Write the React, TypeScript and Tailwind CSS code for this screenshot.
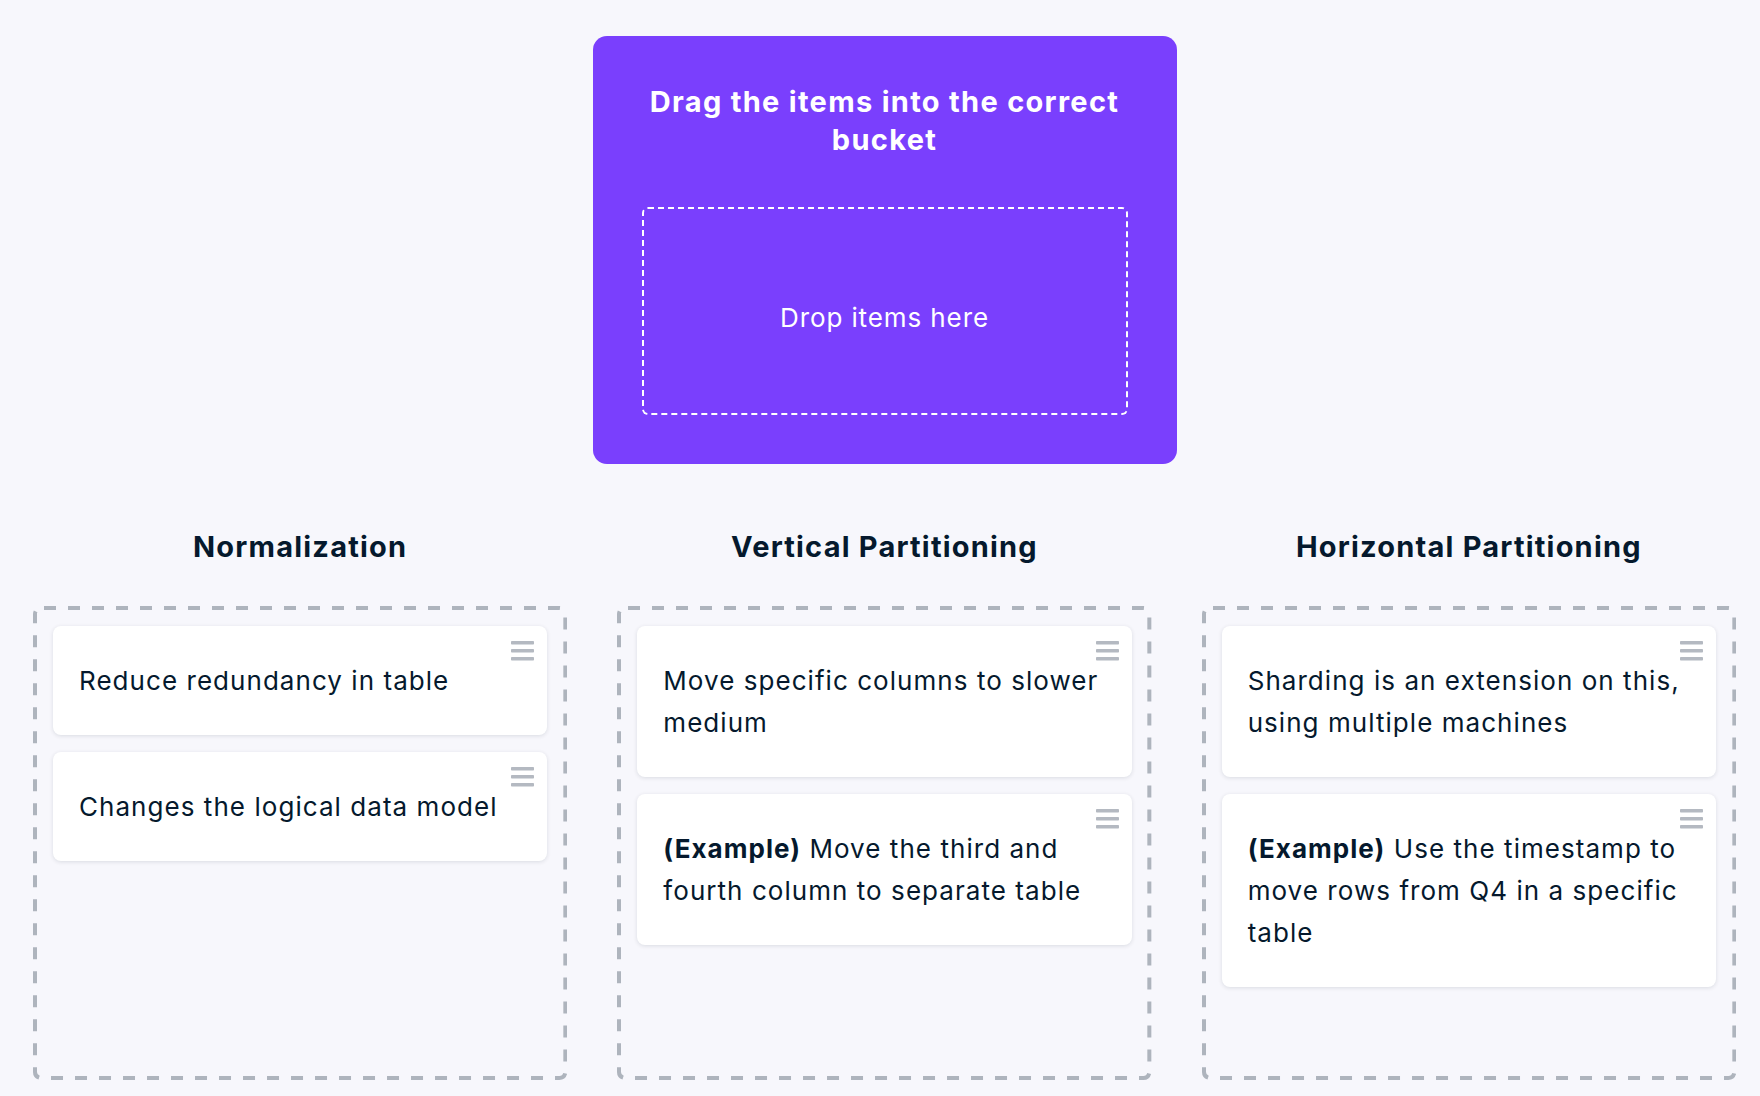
import React from "react";

const Handle = () => (
  <svg
    className="absolute top-[15px] right-[13px]"
    width="23"
    height="20"
    viewBox="0 0 23 20"
    fill="#b4b9c1"
  >
    <rect x="0" y="0" width="23" height="3.5" rx="0.8" />
    <rect x="0" y="8" width="23" height="3.5" rx="0.8" />
    <rect x="0" y="16" width="23" height="3.5" rx="0.8" />
  </svg>
);

const Card = ({ children }: { children: React.ReactNode }) => (
  <div className="relative bg-white rounded-[8px] shadow-[0_1px_4px_rgba(5,25,45,0.12)] pl-[26px] pr-[30px] py-[33.5px] text-[26px] leading-[42px] tracking-[1.05px] text-[#05192d]">
    <Handle />
    <p>{children}</p>
  </div>
);

const DashedBox = () => (
  <svg className="absolute inset-0 w-full h-full pointer-events-none" aria-hidden="true">
    <rect
      x="2"
      y="2"
      width="calc(100% - 4px)"
      height="calc(100% - 4px)"
      rx="6"
      fill="none"
      stroke="#aeb4bd"
      strokeWidth="4"
      strokeDasharray="12 12"
      strokeDashoffset="-3"
    />
  </svg>
);

const Column = ({ title, items }: { title: string; items: React.ReactNode[] }) => (
  <div className="flex flex-col">
    <h2 className="text-center text-[29px] leading-[38px] font-bold tracking-[1.2px] text-[#05192d]">{title}</h2>
    <div className="relative mt-[40px] h-[474px] rounded-[8px] p-[20px] flex flex-col gap-[17px]">
      <DashedBox />
      {items.map((it, i) => (
        <Card key={i}>{it}</Card>
      ))}
    </div>
  </div>
);

export default function App() {
  return (
    <div className="min-h-screen bg-[#f7f7fc] font-['Inter',sans-serif] pl-[33px] pr-[24px] pt-[36px]">
      <div className="mx-auto w-[584px] h-[428px] rounded-[14px] bg-[#7a3ffd] px-[49px] pt-[47px] pb-[49px] flex flex-col">
        <h1 className="text-center text-white text-[29px] leading-[38px] font-bold tracking-[1.3px]">
          Drag the items into the correct bucket
        </h1>
        <div className="mt-[48px] flex-1 border-2 border-dashed border-white rounded-[6px] flex items-center justify-center pt-[12px] text-white text-[26px] tracking-[0.9px]">
          Drop items here
        </div>
      </div>
      <div className="mt-[64px] grid grid-cols-3 gap-[50px]">
        <Column
          title="Normalization"
          items={["Reduce redundancy in table", "Changes the logical data model"]}
        />
        <Column
          title="Vertical Partitioning"
          items={[
            "Move specific columns to slower medium",
            <>
              <span className="font-bold">(Example)</span> Move the third and fourth column to separate table
            </>,
          ]}
        />
        <Column
          title="Horizontal Partitioning"
          items={[
            "Sharding is an extension on this, using multiple machines",
            <>
              <span className="font-bold">(Example)</span> Use the timestamp to move rows from Q4 in a specific table
            </>,
          ]}
        />
      </div>
    </div>
  );
}
